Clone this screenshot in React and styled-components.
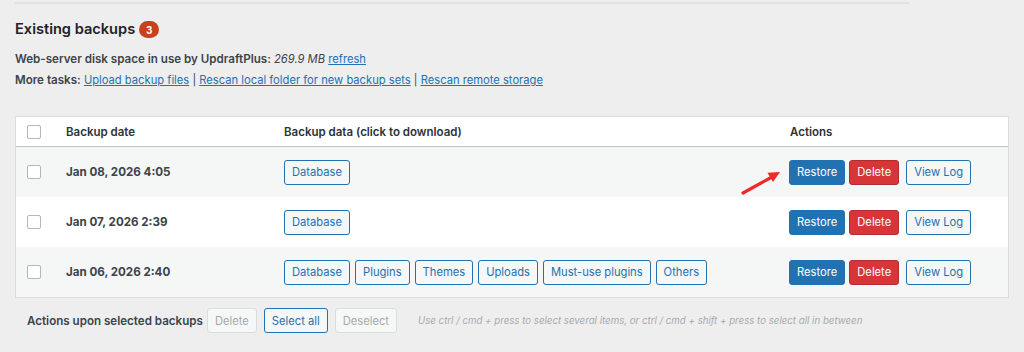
import React from 'react'
import styled, { createGlobalStyle } from 'styled-components'

const GlobalStyle = createGlobalStyle`
  body {
    margin: 0;
    background: #eeeeee;
    font-family: Inter, "Noto Sans", "Liberation Sans", sans-serif;
    color: #2c3338;
  }
`

const colors = {
  blue: '#2271b1',
  red: '#d63638',
  text: '#2c3338',
  border: '#dcdcde',
  stripe: '#f5f6f6'
}

const backups = [
  { date: 'Jan 08, 2026 4:05', data: ['Database'], arrow: true },
  { date: 'Jan 07, 2026 2:39', data: ['Database'] },
  { date: 'Jan 06, 2026 2:40', data: ['Database', 'Plugins', 'Themes', 'Uploads', 'Must-use plugins', 'Others'] }
]

export default function App () {
  return (
    <Page>
      <GlobalStyle />
      <Divider />
      <Heading>
        Existing backups <Badge>3</Badge>
      </Heading>
      <Info>
        <Line>
          <Label>Web-server disk space in use by UpdraftPlus:</Label> <em>269.9 MB</em> <Link>refresh</Link>
        </Line>
        <Line>
          <Label>More tasks:</Label> <Link>Upload backup files</Link> | <Link>Rescan local folder for new backup sets</Link> | <Link>Rescan remote storage</Link>
        </Line>
      </Info>

      <Table>
        <HeadRow>
          <CheckCell><Checkbox /></CheckCell>
          <HeadCell>Backup date</HeadCell>
          <HeadCell>Backup data (click to download)</HeadCell>
          <HeadCell>Actions</HeadCell>
        </HeadRow>
        {backups.map((b, i) => (
          <Row key={i} striped={i % 2 === 0}>
            <CheckCell><Checkbox /></CheckCell>
            <DateCell>{b.date}</DateCell>
            <DataCell>
              {b.data.map(d => <Button key={d}>{d}</Button>)}
            </DataCell>
            <ActionCell>
              {b.arrow && (
                <Arrow width='44' height='38' viewBox='0 0 44 38'>
                  <path d='M3 33 L31 17.5' stroke='#ee2b2b' strokeWidth='3.2' strokeLinecap='round' />
                  <path d='M40 12 L33 22 L27.5 12.8 Z' fill='#ee2b2b' />
                </Arrow>
              )}
              <Button variant='primary'>Restore</Button>
              <Button variant='danger'>Delete</Button>
              <Button spaced>View Log</Button>
            </ActionCell>
          </Row>
        ))}
      </Table>

      <Footer>
        <Label>Actions upon selected backups</Label>
        <Button variant='disabled'>Delete</Button>
        <Button spaced>Select all</Button>
        <Button variant='disabled' spaced>Deselect</Button>
        <Hint>Use ctrl / cmd + press to select several items, or ctrl / cmd + shift + press to select all in between</Hint>
      </Footer>
    </Page>
  )
}

const Page = styled.div`
  padding: 2px 16px 0 15px;
  font-size: 11.2px;
`

const Divider = styled.div`
  width: 894px;
  height: 2px;
  background: #e2e2e3;
`

const Heading = styled.h2`
  margin: 14px 0 0;
  font-size: 14.6px;
  font-weight: 600;
  line-height: 22px;
  color: #1d2327;
  display: flex;
  align-items: center;
  gap: 4px;
`

const Badge = styled.span`
  display: inline-flex;
  align-items: center;
  justify-content: center;
  width: 20px;
  height: 17px;
  border-radius: 9px;
  background: #c8401c;
  color: #fff;
  font-size: 10px;
  font-weight: 700;
  margin-top: 1px;
`

const Info = styled.div`
  margin-top: 9px;
`

const Line = styled.div`
  line-height: 21px;
  color: #3c434a;

  em {
    font-style: italic;
  }
`

const Label = styled.span`
  font-size: 11.6px;
  font-weight: 600;
  color: #3c434a;
`

const Link = styled.a`
  color: ${colors.blue};
  text-decoration: underline;
  cursor: pointer;
`

const Table = styled.div`
  margin-top: 25px;
  width: 992px;
  border: 1px solid ${colors.border};
  background: #fff;
`

const grid = `
  display: grid;
  grid-template-columns: 40px 218px 506px 1fr;
  align-items: center;
`

const HeadRow = styled.div`
  ${grid}
  height: 29px;
  border-bottom: 1px solid #c3c4c7;
`

const Row = styled.div`
  ${grid}
  height: 50px;
  background: ${p => (p.striped ? colors.stripe : '#fff')};
`

const CheckCell = styled.div`
  padding-left: 11px;
  display: flex;
  align-items: center;
`

const Checkbox = styled.span`
  width: 12px;
  height: 12px;
  border: 1px solid #b4b6b9;
  border-radius: 2px;
  background: #fff;
`

const HeadCell = styled.div`
  padding-left: 10px;
  font-size: 11.5px;
  font-weight: 600;
  color: ${colors.text};
`

const DateCell = styled.div`
  padding-left: 10px;
  font-size: 11.6px;
  font-weight: 700;
  color: #3c434a;
`

const DataCell = styled.div`
  padding-left: 10px;
  display: flex;
  gap: 5px;
`

const ActionCell = styled.div`
  position: relative;
  padding-left: 9px;
  display: flex;
  gap: 4px;
`

const Arrow = styled.svg`
  position: absolute;
  left: -40px;
  top: 0;
`

const variants = {
  primary: `background: ${colors.blue}; border-color: ${colors.blue}; color: #fff;`,
  danger: `background: ${colors.red}; border-color: #b32d2e; color: #fff;`,
  disabled: `background: #f6f7f7; border-color: #dcdcde; color: #a7aaad;`
}

const Button = styled.span`
  display: inline-flex;
  align-items: center;
  height: 23px;
  padding: 0 7px;
  border: 1px solid ${colors.blue};
  border-radius: 3px;
  background: #f6f7f7;
  color: ${colors.blue};
  font-size: 11.2px;
  white-space: nowrap;
  ${p => (p.spaced ? 'margin-left: 3px;' : '')}
  ${p => variants[p.variant] || ''}
`

const Footer = styled.div`
  display: flex;
  align-items: center;
  gap: 4px;
  margin-top: 10px;
  padding-left: 12px;
  height: 25px;
`

const Hint = styled.span`
  margin-left: 17px;
  font-size: 9.7px;
  font-style: italic;
  color: #a7aaad;
`
